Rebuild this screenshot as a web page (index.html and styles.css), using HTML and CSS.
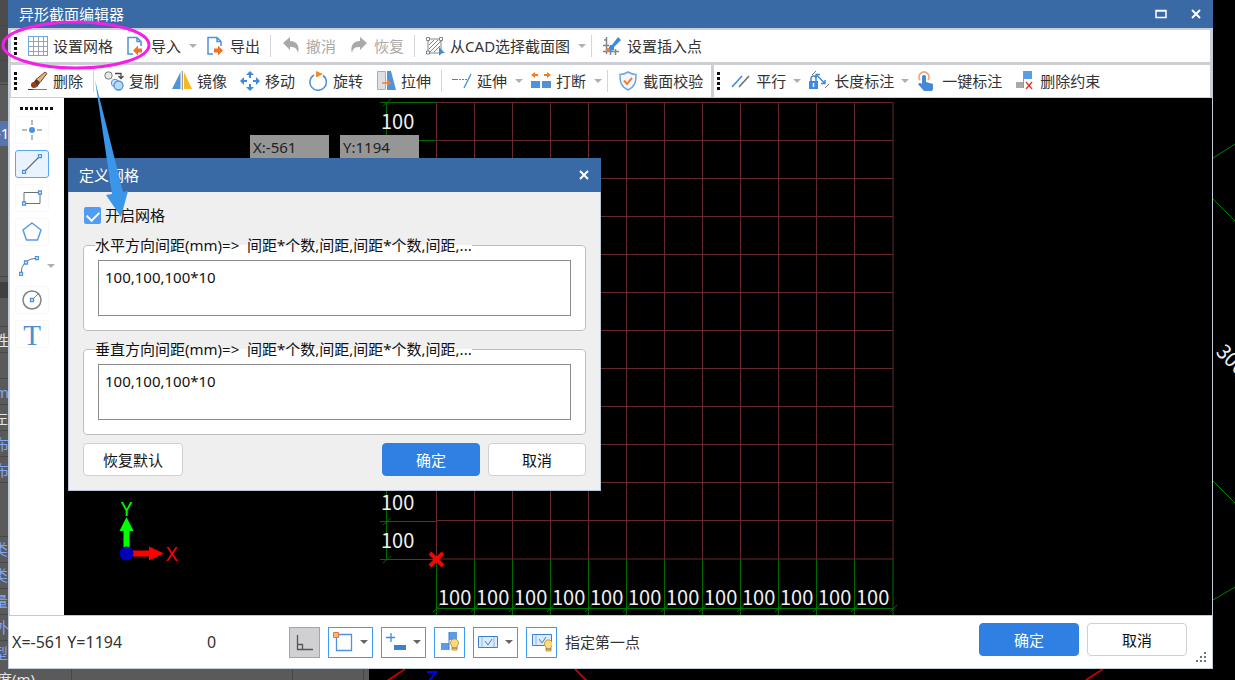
FILE: index.html
```html
<!DOCTYPE html>
<html lang="zh-CN">
<head>
<meta charset="utf-8">
<title>异形截面编辑器</title>
<link rel="stylesheet" href="styles.css">
</head>
<body>
<svg class="backdrop" aria-hidden="true">
  <rect width="369" height="100%" fill="#5a5a5a"/>
  <rect width="8" height="82" fill="#4c4c4c"/>
  <rect y="121" width="9" height="25" fill="#5674ad"/>
  <rect y="282" width="9" height="16" fill="#404040"/>
  <path d="M0 25.500h9M0 60.500h9M0 84.500h9M0 276.500h9M0 326.500h9M0 352.500h9M0 378.500h9M0 404.500h9M0 430.500h9M0 456.500h9M0 482.500h9M0 536.500h9M0 562.500h9M0 588.500h9M0 614.500h9M0 640.500h9M71.500 669v11M292.500 669v11M363.500 669v11" stroke="#474747"/>
  <g font-size="15" fill="#7fa6f5">
    <text x="-4" y="139" fill="#fff">-1</text>
    <text x="-6" y="346" fill="#e4e4e4">性</text>
    <text x="-5" y="398">m</text>
    <text x="-7" y="424" fill="#e4e4e4">左</text>
    <text x="-6" y="450">布</text>
    <text x="-6" y="476">布</text>
    <text x="-7" y="555">类</text>
    <text x="-7" y="581">类</text>
    <text x="-7" y="607">量</text>
    <text x="-6" y="633">外</text>
    <text x="-7" y="659">型</text>
    <text x="-3" y="685" fill="#e4e4e4">度(m)</text>
  </g>
  <path d="M1213 158l22-14M1213 199l22 22M1213 481l22 22M1213 600l22-13" stroke="#008000" fill="none"/>
  <path d="M387 681l18-12M575 669l12 12M1086 680l17-11" stroke="#c00000" stroke-width="2" fill="none"/>
  <path d="M427 672h9l-7 9" stroke="#00f" stroke-width="2" fill="none"/>
  <text class="cad-text" transform="translate(1215 353) rotate(45)" fill="#fff">300</text>
</svg>

<main class="window">
  <header class="titlebar">
    <h1 class="title">异形截面编辑器</h1>
    <button class="win-btn" aria-label="最大化"><svg width="12" height="10"><path d="M1 1.500h10v7H1zM1 2h10" fill="none" stroke="#fff" stroke-width="1.500"/></svg></button>
    <button class="win-btn" aria-label="关闭"><svg width="10" height="10"><path d="M1 1l8 8M9 1L1 9" stroke="#fff" stroke-width="2"/></svg></button>
  </header>

  <nav class="toolbar" aria-label="文件">
    <span class="grip"></span>
    <button class="tool"><svg class="icon" viewBox="0 0 20 20"><path d="M1 5.500h18M1 10.500h18M1 15.500h18M5.500 1v18M10.500 1v18M15.500 1v18" stroke="#9aa4ac"/><rect x="0.500" y="0.500" width="19" height="19" fill="none" stroke="#6ea6e4"/></svg>设置网格</button>
    <button class="tool"><svg class="icon" viewBox="0 0 20 20"><path d="M7 18H2V1.500h9l4 4V10M11 1.500v4h4" fill="none" stroke="#4f93dc" stroke-width="1.500"/><path d="M7 14.500l5-5v3h4v4h-4v3z" fill="#ee7326"/></svg>导入<span class="caret"></span></button>
    <button class="tool"><svg class="icon" viewBox="0 0 20 20"><path d="M8 18H3V1.500h9l4 4V10M12 1.500v4h4" fill="none" stroke="#4f93dc" stroke-width="1.500"/><path d="M18 14.500l-5-5v3H9v4h4v3z" fill="#ee7326"/></svg>导出</button>
    <span class="sep"></span>
    <button class="tool" disabled><svg class="icon" viewBox="0 0 20 20"><path d="M2 7l7-6v4c7 0 10 5 8 12-1-5-3-6-8-6v3z" fill="#a9a9a9"/></svg>撤消</button>
    <button class="tool" disabled><svg class="icon" viewBox="0 0 20 20"><path d="M18 7l-7-6v4C4 5 1 10 3 17c1-5 3-6 8-6v3z" fill="#a9a9a9"/></svg>恢复</button>
    <span class="sep"></span>
    <button class="tool"><svg class="icon" viewBox="0 0 20 20"><path d="M3 3h13v14H3zM4 9l5-5M4 13l9-9M5 16L16 5M9 16l6-6" fill="none" stroke="#7c868c"/><path d="M1.500 1.500h3v3h-3zM14.500 1.500h3v3h-3zM1.500 15h3v3h-3z" fill="#fff" stroke="#7c868c"/><path d="M14 11l6 6-3 .300-3 2.500z" fill="#3e8ae0"/></svg>从CAD选择截面图<span class="caret"></span></button>
    <span class="sep"></span>
    <button class="tool"><svg class="icon" viewBox="0 0 20 20"><path d="M2 4h3M4.500 1v17M8.500 14v5M1 9.500h6M1 15.500h16M13.500 13v6" stroke="#7c868c" stroke-width="1.500"/><path d="M16 1l3 3-7 7 0 3-5 1-1-1 2-5h2z" fill="#3e8ae0"/><circle cx="6" cy="14" r="2" fill="#f0803c"/></svg>设置插入点</button>
  </nav>

  <div class="toolbar-row">
    <nav class="toolbar" aria-label="编辑">
      <span class="grip"></span>
      <button class="tool"><svg class="icon" viewBox="0 0 20 20"><path d="M17 1l2 1.500-7 9-4-3z" fill="#e7b071" stroke="#6b4d32"/><path d="M8 8l4 4-3 4-6-1z" fill="#493b35"/><circle cx="6" cy="14" r="3" fill="#9b3b1e"/><path d="M0 18.500h5" stroke="#333"/><path d="M5 18.500h14" stroke="#e4572f"/></svg>删除</button>
      <span class="sep"></span>
      <button class="tool"><svg class="icon" viewBox="0 0 20 20"><circle cx="4.500" cy="4.500" r="3.700" fill="#e6e8ea" stroke="#777"/><path d="M11 2.500h6v4M14.500 5l2.500 2.500L19.500 5" fill="none" stroke="#444" stroke-width="1.300"/><circle cx="11" cy="12" r="3.700" fill="#cfe3f8" stroke="#4f93dc"/><circle cx="14.500" cy="14.500" r="4.500" fill="#b9d8f7" stroke="#4f93dc" stroke-width="1.300"/></svg>复制</button>
      <button class="tool"><svg class="icon" viewBox="0 0 20 20"><path d="M8.500 1v17H0z" fill="#4f93dc"/><path d="M12 1v17h8z" fill="#f9b820"/><path d="M10.300 0v19" stroke="#888"/></svg>镜像</button>
      <button class="tool"><svg class="icon" viewBox="0 0 20 20"><path d="M10 0l4 4H6zM10 20l4-4H6zM0 10l4-4v8zM20 10l-4-4v8z" fill="#3e8ae0"/><path d="M10 3v4M10 13v4M3 10h4M13 10h4" stroke="#3e8ae0" stroke-width="2"/></svg>移动</button>
      <button class="tool"><svg class="icon" viewBox="0 0 20 20"><path d="M6 4a8.200 8.200 0 1 0 9 .500" fill="none" stroke="#4f93dc" stroke-width="1.600"/><path d="M8 0l7 3-7 3.500z" fill="#f28a27"/></svg>旋转</button>
      <button class="tool"><svg class="icon" viewBox="0 0 20 20"><path d="M1.500.500h8v18h-8z" fill="#dce0e4" stroke="#a8afb5"/><path d="M11 0h4l5 19h-9z" fill="#4f93dc"/><path d="M6 12h8M11 9l3 3-3 3" fill="none" stroke="#f28030" stroke-width="1.500"/></svg>拉伸</button>
      <span class="sep"></span>
      <button class="tool"><svg class="icon" viewBox="0 0 20 20"><path d="M0 8.500h6" stroke="#777"/><path d="M7 8.500h9" stroke="#3e8ae0" stroke-dasharray="2 1"/><path d="M19 3l-7 14" stroke="#3e8ae0" stroke-width="1.300"/></svg>延伸<span class="caret"></span></button>
      <button class="tool"><svg class="icon" viewBox="0 0 20 20"><path d="M0 10h9v7H0zM11 10h9v7h-9z" fill="#4f93dc"/><path d="M0 4l4-3v2h3v2H4v2zM20 4l-4-3v2h-3v2h3v2z" fill="#ee7f24"/></svg>打断<span class="caret"></span></button>
      <span class="sep"></span>
      <button class="tool"><svg class="icon" viewBox="0 0 20 20"><path d="M10 1q4 2.500 8 2.500c0 8-1 12-8 15.500C3 15.500 2 11.500 2 3.500Q6 3.500 10 1z" fill="#f2f7fd" stroke="#6ea6e4" stroke-width="1.500"/><path d="M6 9.500l3 3.500 5-6" fill="none" stroke="#f28030" stroke-width="2"/></svg>截面校验</button>
    </nav>
    <nav class="toolbar toolbar-grow" aria-label="约束">
      <span class="grip"></span>
      <button class="tool"><svg class="icon" viewBox="0 0 20 20"><path d="M1 16L11 5" stroke="#3e8ae0" stroke-width="1.600"/><path d="M8 16L18 5" stroke="#687078" stroke-width="1.600"/></svg>平行<span class="caret"></span></button>
      <button class="tool"><svg class="icon" viewBox="0 0 20 20"><path d="M0 10h9v8H0z" fill="#3e8ae0"/><path d="M2 10V7.500a2.500 2.500 0 0 1 5 0V10" fill="none" stroke="#3e8ae0" stroke-width="1.500"/><path d="M4.500 12v4" stroke="#fff" stroke-width="1.500"/><path d="M7 3.500l9 9M7 7V3.500h4M12 12.500h4V9" fill="none" stroke="#3e8ae0" stroke-width="1.500"/><path d="M3 4l4-4M16 17l4-4" stroke="#777"/></svg>长度标注<span class="caret"></span></button>
      <button class="tool"><svg class="icon" viewBox="0 0 20 20"><path d="M3 9a5 5 0 1 1 8 0" fill="none" stroke="#f3a37c" stroke-width="1.800"/><path d="M5 5q2-2 4 0v6l7 2v5l-1 2H7l-6-7q2-2 4 0z" fill="#4488d6"/></svg>一键标注</button>
      <button class="tool"><svg class="icon" viewBox="0 0 20 20"><path d="M8 0h9v8H8z" fill="#5a9cea"/><path d="M1 11h7v6H1z" fill="#a7abad"/><path d="M8.500 0v17" stroke="#f28030"/><path d="M11 11l6 7M17 11l-6 7" stroke="#dd3b2c" stroke-width="1.400"/></svg>删除约束</button>
    </nav>
  </div>

  <div class="work">
    <aside class="palette" aria-label="绘图">
      <span class="palette-grip"></span>
      <button class="shape" aria-label="点"><svg width="20" height="20"><path d="M10 0v5M10 15v5M0 10h5M15 10h5" stroke="#777"/><circle cx="10" cy="10" r="3" fill="#4a93e6"/></svg></button>
      <button class="shape active" aria-label="直线"><svg width="20" height="20"><path d="M3 17L17 3" stroke="#68727a" stroke-width="1.300"/><path d="M.500 16.500h3v3h-3zM16.500.500h3v3h-3z" fill="#fff" stroke="#4a93e6" stroke-width="1.300"/></svg></button>
      <button class="shape" aria-label="矩形"><svg width="20" height="20"><path d="M2 4.500h16v11H2z" fill="none" stroke="#68727a"/><path d="M.500 14h3v3h-3zM16.500 3h3v3h-3z" fill="#fff" stroke="#4a93e6" stroke-width="1.300"/></svg></button>
      <button class="shape" aria-label="多边形"><svg width="20" height="20"><path d="M10 1l9 7-3.500 10h-11L1 8z" fill="none" stroke="#5a9ce6" stroke-width="1.500"/></svg></button>
      <button class="shape shape-menu" aria-label="圆弧"><svg width="20" height="20"><path d="M2 18Q2 3 18 2" fill="none" stroke="#68727a"/><path d="M.500 16.500h3v3h-3zM5.500 5h3v3h-3zM16.500.500h3v3h-3z" fill="#fff" stroke="#4a93e6" stroke-width="1.300"/></svg><span class="caret"></span></button>
      <button class="shape" aria-label="圆"><svg width="20" height="20"><circle cx="10" cy="10" r="9" fill="none" stroke="#7b8589" stroke-width="1.500"/><path d="M10 10l6-6" stroke="#4a93e6"/><path d="M8.500 8.500h3v3h-3z" fill="#fff" stroke="#4a93e6" stroke-width="1.300"/></svg></button>
      <button class="shape shape-text">T</button>
    </aside>

    <section class="canvas" aria-label="绘图区">
      <svg class="drawing">
        <g transform="translate(-64 -98)">
          <path class="grid-line" d="M436.500 102v457M474.500 102v457M512.500 102v457M550.500 102v457M588.500 102v457M626.500 102v457M664.500 102v457M702.500 102v457M740.500 102v457M778.500 102v457M816.500 102v457M854.500 102v457M893 102v457M436 102.500h457M436 140.500h457M436 178.500h457M436 216.500h457M436 254.500h457M436 292.500h457M436 330.500h457M436 368.500h457M436 406.500h457M436 444.500h457M436 482.500h457M436 520.500h457M436 559h457"/>
          <path class="dim-line" d="M386.500 102v457M380 102.500h56M380 140.500h56M380 521.500h56M380 559.500h56M383 106l8-7M383 525l8-7M383 563l8-7"/>
          <path class="dim-line" d="M436.500 559v57M474.500 559v57M512.500 559v57M550.500 559v57M588.500 559v57M626.500 559v57M664.500 559v57M702.500 559v57M740.500 559v57M778.500 559v57M816.500 559v57M854.500 559v57M893 559v57M436 608.500h457"/>
          <path class="dim-line" d="M433 612l7-7M471 612l7-7M509 612l7-7M547 612l7-7M585 612l7-7M623 612l7-7M661 612l7-7M699 612l7-7M737 612l7-7M775 612l7-7M813 612l7-7M851 612l7-7M890 612l7-7"/>
          <g class="cad-text">
            <text x="381" y="129">100</text><text x="381" y="510">100</text><text x="381" y="548">100</text>
            <text x="438" y="605">100</text><text x="476" y="605">100</text><text x="514" y="605">100</text><text x="552" y="605">100</text><text x="590" y="605">100</text><text x="628" y="605">100</text><text x="666" y="605">100</text><text x="704" y="605">100</text><text x="742" y="605">100</text><text x="780" y="605">100</text><text x="818" y="605">100</text><text x="856" y="605">100</text>
          </g>
          <path d="M430 553l13 13M443 553l-13 13" stroke="#f00" stroke-width="4"/>
          <path d="M126.500 552v-24" stroke="#0f0" stroke-width="6"/><path d="M126.500 517l7 14h-14z" fill="#0f0"/>
          <path d="M130 553.500h21" stroke="#f00" stroke-width="6"/><path d="M164 553.500l-15-7v14z" fill="#f00"/>
          <circle cx="126.500" cy="553.500" r="7" fill="#0000b8"/>
          <text class="axis" x="121" y="516" fill="#0f0">Y</text>
          <text class="axis" x="166" y="561" fill="#f00">X</text>
        </g>
      </svg>
      <output class="coord coord-x">X:-561</output>
      <output class="coord coord-y">Y:1194</output>

      <form class="dialog" role="dialog" aria-labelledby="grid-title">
        <div class="dialog-title">
          <h2 class="title" id="grid-title">定义网格</h2>
          <button class="win-btn" type="button" aria-label="关闭"><svg width="10" height="10"><path d="M1 1l8 8M9 1L1 9" stroke="#fff" stroke-width="2"/></svg></button>
        </div>
        <div class="dialog-body">
          <label class="check"><input type="checkbox" checked>开启网格</label>
          <fieldset class="group">
            <legend id="h-label">水平方向间距(mm)=&gt;&nbsp; 间距*个数,间距,间距*个数,间距,...</legend>
            <textarea class="field" aria-labelledby="h-label">100,100,100*10</textarea>
          </fieldset>
          <fieldset class="group">
            <legend id="v-label">垂直方向间距(mm)=&gt;&nbsp; 间距*个数,间距,间距*个数,间距,...</legend>
            <textarea class="field" aria-labelledby="v-label">100,100,100*10</textarea>
          </fieldset>
          <div class="actions">
            <button class="btn" type="button">恢复默认</button>
            <span class="spacer"></span>
            <button class="btn primary" type="button">确定</button>
            <button class="btn" type="button">取消</button>
          </div>
        </div>
      </form>
    </section>
  </div>

  <footer class="status">
    <span class="position">X=-561 Y=1194</span>
    <span class="angle">0</span>
    <div class="toggles">
      <button class="toggle pressed" aria-label="正交"><svg width="20" height="20"><path d="M2.500 3v14.500H18M3 12.500h4.500V17" fill="none" stroke="#555" stroke-width="1.300"/></svg></button>
      <button class="toggle" aria-label="对象捕捉"><svg width="20" height="20"><path d="M3.500 2.500h15v16h-15z" fill="none" stroke="#4a93e6" stroke-width="1.300"/><path d="M.500.500h5v5h-5z" fill="#f9b58a" stroke="#e8762e"/></svg><span class="caret dark"></span></button>
      <button class="toggle" aria-label="动态输入"><svg width="20" height="20"><path d="M5 1v9M0 5.500h9" stroke="#3e8ae0" stroke-width="1.300"/><path d="M8 13h12v5H8z" fill="#3e7fd0"/></svg><span class="caret dark"></span></button>
      <button class="toggle" aria-label="约束显示"><svg width="20" height="20"><path d="M9 0h8v8H9zM1 11h8v7H1z" fill="#5a9cea"/><path d="M9 0v18" stroke="#3e7fd0"/><path d="M12 14a4 4 0 1 1 5 0v4h-5z" fill="#ffd97a" stroke="#c89a2c"/><path d="M12 16h5" stroke="#666"/></svg></button>
      <button class="toggle" aria-label="标注约束"><svg width="20" height="20"><path d="M.500 4.500h19v11H.500z" fill="#dcebfb" stroke="#3e7fd0"/><path d="M4 5v10M16 5v10" stroke="#8db9ea"/><path d="M7 9l3 4 4-6" fill="none" stroke="#3e7fd0"/></svg><span class="caret dark"></span></button>
      <button class="toggle" aria-label="标注显示"><svg width="20" height="20"><path d="M.500 2.500h19v11H.500z" fill="#dcebfb" stroke="#3e7fd0"/><path d="M4 3v10" stroke="#8db9ea"/><path d="M7 7l3 4 4-6" fill="none" stroke="#3e7fd0"/><path d="M14 15a4 4 0 1 1 5 0v4h-5z" fill="#ffd97a" stroke="#c89a2c"/><path d="M14 17h5" stroke="#666"/></svg></button>
    </div>
    <span class="prompt">指定第一点</span>
    <span class="spacer"></span>
    <div class="confirm">
      <button class="btn primary">确定</button>
      <button class="btn">取消</button>
    </div>
    <svg class="resize" width="11" height="11"><path d="M8 0h2v2H8zM4 4h2v2H4zM8 4h2v2H8zM0 8h2v2H0zM4 8h2v2H4zM8 8h2v2H8z" fill="#6f757d"/></svg>
  </footer>
</main>

<svg class="annotation" aria-hidden="true">
  <ellipse cx="76" cy="45" rx="73" ry="23" fill="none" stroke="#f320e8" stroke-width="3"/>
  <path d="M95 80l28 112 5-1-7 26-15-22 6-1z" fill="#3a96e8"/>
</svg>
</body>
</html>
```
FILE: styles.css
```css
* { box-sizing: border-box; }

body {
  display: flex;
  position: relative;
  height: 100vh;
  margin: 0;
  padding: 0 22px 11px 8px;
  overflow: hidden;
  background: #000;
  color: #333;
  font: 15px/20px "Noto Sans", "Noto Sans CJK SC", sans-serif;
}

button, textarea, input { font: inherit; color: inherit; }
button { padding: 0; border: 0; background: none; }

.backdrop, .annotation {
  position: absolute;
  inset: 0;
  width: 100%;
  height: 100%;
  pointer-events: none;
}

.window {
  display: flex;
  flex: 1;
  flex-direction: column;
  position: relative;
  min-width: 0;
  border: 1px solid #c3ccdc;
  border-width: 0 1px 1px;
  background: #fff;
}

.titlebar, .dialog-title {
  display: flex;
  align-items: center;
  background: #396aa6;
  color: #fff;
}
.titlebar { height: 28px; padding: 0 0 0 11px; margin: 0 -1px; }
.title { flex: 1; margin: 0; font-size: 15px; font-weight: 400; }
.win-btn { display: grid; place-items: center; width: 35px; height: 24px; }

.toolbar {
  display: flex;
  align-items: center;
  gap: 3px;
  height: 35px;
  padding: 0 3px;
  border: 2px solid #ccd0d5;
  border-bottom-width: 1px;
  background: #fff;
}
.toolbar-row { display: flex; }
.toolbar-row .toolbar { border-right: 0; }
.toolbar-row .toolbar-grow { flex: 1; border-right: 2px solid #ccd0d5; border-left-width: 3px; }

.grip {
  width: 3px;
  height: 19px;
  margin-right: 3px;
  background: repeating-linear-gradient(#111 0 3px, transparent 3px 5px);
}
.tool {
  display: flex;
  align-items: center;
  gap: 5px;
  height: 27px;
  padding: 0 5px;
  white-space: nowrap;
}
.tool:has(.caret) { padding-right: 0; }
.tool:disabled { color: #aaa; }
.icon { width: 20px; height: 20px; flex: none; }
.sep { width: 1px; height: 22px; margin: 0 2px; background: #d5d5d5; }
.caret {
  margin-left: 3px;
  border: 4px solid transparent;
  border-top-color: #b0b0b0;
  border-bottom: 0;
}
.toolbar-grow .caret { margin-left: 2px; }
.caret.dark { margin-left: 7px; border-top-color: #666; }

.work { display: flex; flex: 1; min-height: 0; }

.palette {
  display: flex;
  flex: none;
  flex-direction: column;
  gap: 6px;
  width: 55px;
  padding: 9px 5px;
  border-left: 1px solid #ccd0d5;
}
.palette-grip {
  width: 33px;
  height: 3px;
  margin: 0 0 0 5px;
  background: repeating-linear-gradient(90deg, #111 0 3px, transparent 3px 5px);
}
.shape {
  display: grid;
  place-items: center;
  flex: none;
  width: 34px;
  height: 28px;
  border: 1px solid #f8f8f8;
  border-radius: 3px;
}
.shape.active { border-color: #58a5f5; background: #e8f3fe; }
.shape-menu { display: flex; align-items: center; width: 44px; padding-left: 3px; border-color: transparent; }
.shape-menu .caret { margin-left: 8px; }
.shape-text { color: #4a8ed8; font: 29px/28px "Liberation Serif", serif; }

.canvas { flex: 1; position: relative; min-width: 0; background: #000; }
.drawing { display: block; position: absolute; width: 100%; height: 100%; }
.grid-line { fill: none; stroke: #662a2c; }
.dim-line { fill: none; stroke: #006c00; }
.cad-text { font: 20px "Noto Sans CJK SC", sans-serif; fill: #f0f0f0; }
.axis { font: 20px "Noto Sans", sans-serif; }

.coord {
  position: absolute;
  top: 37px;
  width: 79px;
  height: 24px;
  padding: 2px 3px;
  background: #969696;
  color: #222;
}
.coord-x { left: 186px; }
.coord-y { left: 276px; }

.dialog {
  position: absolute;
  top: 60px;
  left: 4px;
  width: 533px;
  border: 1px solid #b9c5d6;
  border-top: 0;
  background: #efefef;
  color: #111;
}
.dialog-title { height: 34px; margin: 0 -1px; padding: 0 0 0 11px; }
.dialog-body { padding: 13px 14px 14px; }
.check { display: flex; align-items: center; gap: 4px; margin-bottom: 10px; }
.check input {
  appearance: none;
  width: 17px;
  height: 17px;
  margin: 0 0 0 1px;
  border-radius: 2px;
  background: #4f9df5;
}
.check input::before {
  content: "";
  display: block;
  width: 6px;
  height: 10px;
  margin: 2px 0 0 5px;
  border: solid #fff;
  border-width: 0 2px 2px 0;
  transform: rotate(45deg);
}
.group {
  min-width: 0;
  margin: 0 0 8px;
  padding: 5px 14px 14px;
  border: 1px solid #bdbdbd;
  border-radius: 4px;
  background: #fff;
}
.group legend { height: 20px; margin-left: -3px; padding: 0; white-space: nowrap; }
.field {
  display: block;
  width: 100%;
  height: 56px;
  padding: 6px;
  border: 1px solid #8a8a8a;
  background: #fff;
  resize: none;
}
.actions { display: flex; gap: 8px; }
.spacer { flex: 1; }
.btn {
  width: 100px;
  height: 33px;
  border: 1px solid #d0d0d0;
  border-radius: 4px;
  background: #fff;
  color: #111;
}
.actions .btn { width: 98px; }
.actions .btn:first-child { width: 100px; }
.btn.primary { border-color: #2f80e2; background: #2f80e2; color: #fff; }

.status {
  display: flex;
  align-items: center;
  height: 53px;
  padding-left: 3px;
  border-top: 1px solid #c8c8c8;
  background: #fff;
}
.position, .angle { font-size: 16px; }
.position { width: 195px; }
.angle { width: 82px; }
.toggles { display: flex; gap: 8px; }
.toggle {
  display: flex;
  align-items: center;
  justify-content: center;
  min-width: 31px;
  height: 31px;
  padding: 0 4px;
  border: 1px solid #3c9df5;
}
.toggle.pressed { border-color: #a5a5a5; background: #d0d0d2; }
.prompt { margin-left: 8px; }
.confirm { display: flex; gap: 8px; margin: 0 9px 5px 0; }
.resize { align-self: flex-end; margin: 0 5px 5px 0; }
```
